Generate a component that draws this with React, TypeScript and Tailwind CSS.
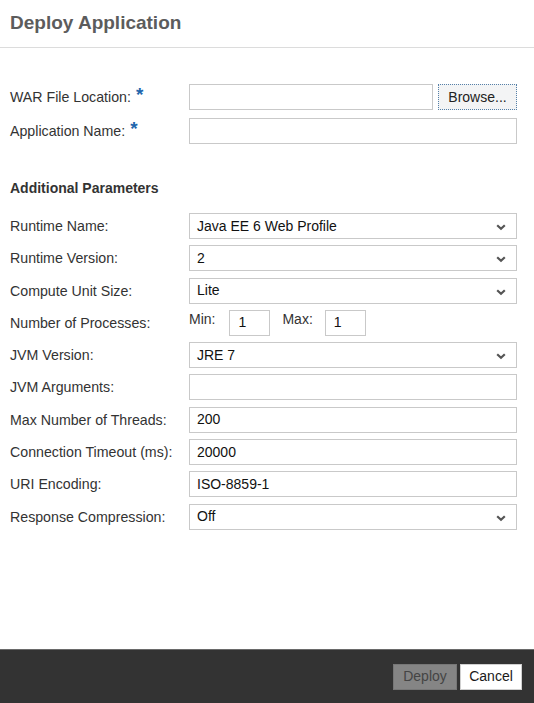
import React from "react";

const Chevron = () => (
  <svg width="10" height="7" viewBox="0 0 10 7" className="absolute right-[10px] top-[10px]">
    <path d="M1.2 1.2 L5 4.8 L8.8 1.2" fill="none" stroke="#555" strokeWidth="2.2" />
  </svg>
);

const Label = ({ children, req }: { children: React.ReactNode; req?: boolean }) => (
  <div className="w-[179px] shrink-0 text-[14.2px] text-[#333] leading-[16px]">
    {children}
    {req && <span className="text-[#1f67ad] font-bold text-[19px] leading-[10px] align-[1px] ml-[5px]">*</span>}
  </div>
);

const TextBox = ({ value = "" }: { value?: string }) => (
  <div className="flex-1 h-[26px] border border-[#c9c9c9] bg-white px-[7px] flex items-center text-[14px] text-[#111]">
    {value}
  </div>
);

const SelectBox = ({ value }: { value: string }) => (
  <div className="relative flex-1 h-[26px] border border-[#c9c9c9] bg-white px-[7px] flex items-center text-[14px] text-[#111]">
    {value}
    <Chevron />
  </div>
);

const Row = ({ children }: { children: React.ReactNode }) => (
  <div className="flex items-center h-[26px]">{children}</div>
);

export default function App() {
  return (
    <div
      className="w-[534px] h-[703px] bg-white flex flex-col"
      style={{ fontFamily: '"Liberation Sans", Arial, sans-serif' }}
    >
      <div className="h-[48px] border-b border-[#dcdcdc] pl-[10px] flex items-center">
        <h1 className="text-[19px] font-bold text-[#5c5c5c] leading-none -mt-[3px]">Deploy Application</h1>
      </div>

      <div className="pl-[10px] pr-[17px] pt-[36px] flex flex-col">
        <div className="flex flex-col gap-[8px]">
          <Row>
            <Label req>WAR File Location:</Label>
            <div className="flex-1 h-[26px] border border-[#c9c9c9] bg-white" />
            <button className="ml-[5px] w-[79px] h-[26px] bg-[#f3f4f5] border border-dotted border-[#5580a8] text-[14px] text-[#222]">
              Browse...
            </button>
          </Row>
          <Row>
            <Label req>Application Name:</Label>
            <TextBox />
          </Row>
        </div>

        <div className="mt-[36px] h-[16px] text-[14px] font-bold text-[#333] leading-[16px]">Additional Parameters</div>

        <div className="mt-[17px] flex flex-col gap-[6.3px]">
          <Row>
            <Label>Runtime Name:</Label>
            <SelectBox value="Java EE 6 Web Profile" />
          </Row>
          <Row>
            <Label>Runtime Version:</Label>
            <SelectBox value="2" />
          </Row>
          <Row>
            <Label>Compute Unit Size:</Label>
            <SelectBox value="Lite" />
          </Row>
          <Row>
            <Label>Number of Processes:</Label>
            <div className="flex h-[26px] items-start">
              <span className="text-[14px] text-[#333] leading-[16px] mt-[1px]">Min:</span>
              <div className="ml-[14px] w-[41px] h-[26px] border border-[#c9c9c9] px-[8px] flex items-center text-[14px] text-[#111]">
                1
              </div>
              <span className="ml-[12px] text-[14px] text-[#333] leading-[16px] mt-[1px]">Max:</span>
              <div className="ml-[12px] w-[41px] h-[26px] border border-[#c9c9c9] px-[8px] flex items-center text-[14px] text-[#111]">
                1
              </div>
            </div>
          </Row>
          <Row>
            <Label>JVM Version:</Label>
            <SelectBox value="JRE 7" />
          </Row>
          <Row>
            <Label>JVM Arguments:</Label>
            <TextBox />
          </Row>
          <Row>
            <Label>Max Number of Threads:</Label>
            <TextBox value="200" />
          </Row>
          <Row>
            <Label>Connection Timeout (ms):</Label>
            <TextBox value="20000" />
          </Row>
          <Row>
            <Label>URI Encoding:</Label>
            <TextBox value="ISO-8859-1" />
          </Row>
          <Row>
            <Label>Response Compression:</Label>
            <SelectBox value="Off" />
          </Row>
        </div>
      </div>

      <div className="mt-auto h-[54px] bg-[#333333] border-t border-[#6a6a6a] flex items-center justify-end pr-[12px] gap-[3px]">
        <button className="w-[64px] h-[26px] bg-[#858585] border border-[#777] text-[14px] text-[#444]">
          Deploy
        </button>
        <button className="w-[62px] h-[26px] bg-white border border-[#d0d0d0] text-[14px] text-[#1a1a1a]">
          Cancel
        </button>
      </div>
    </div>
  );
}
